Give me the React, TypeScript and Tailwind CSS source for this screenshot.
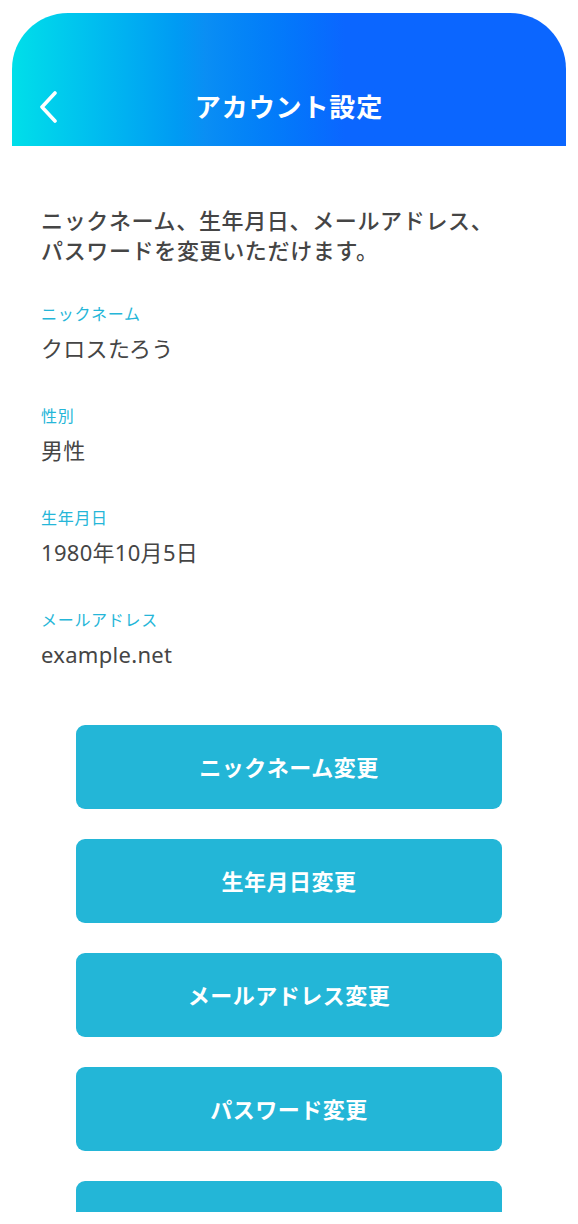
import React from 'react';

const fields = [
  { label: 'ニックネーム', value: 'クロスたろう' },
  { label: '性別', value: '男性' },
  { label: '生年月日', value: '1980年10月5日' },
  { label: 'メールアドレス', value: 'example.net' },
];

const actions = ['ニックネーム変更', '生年月日変更', 'メールアドレス変更', 'パスワード変更', '退会'];

export default function App() {
  return (
    <div
      className="min-h-screen w-full bg-white overflow-hidden"
      style={{ fontFamily: '"Noto Sans", "Noto Sans CJK JP", sans-serif' }}
    >
      {/* header */}
      <div className="px-[12px] pt-[13px]">
        <div className="relative h-[133px] rounded-t-[56px] bg-linear-to-r from-[#00dfe9] via-[#0a8ef4] via-35% to-[#0b66ff] to-60% flex items-center justify-center pt-[55px]">
          <button className="absolute left-[27px] top-[78px] p-0">
            <svg width="20" height="32" viewBox="0 0 20 32" fill="none">
              <path d="M16 2 L3 16 L16 30" stroke="white" strokeWidth="3.6" strokeLinecap="round" strokeLinejoin="round" />
            </svg>
          </button>
          <h1 className="text-white text-[26px] font-bold leading-none tracking-[0.9px]">アカウント設定</h1>
        </div>
      </div>

      <div className="px-[41px] pt-[59px]">
        <p className="text-[22px] leading-[30px] font-medium text-[#454545] tracking-[0.65px]">
          ニックネーム、生年月日、メールアドレス、
          <br />
          パスワードを変更いただけます。
        </p>

        <div className="mt-[38px] flex flex-col gap-[42px]">
          {fields.map((f) => (
            <div key={f.label} className="flex flex-col gap-[8px]">
              <span className="text-[16px] leading-[22px] text-[#25b6d8] tracking-[0.7px]">{f.label}</span>
              <span className="text-[22px] leading-[30px] text-[#454545] tracking-[0.3px]">{f.value}</span>
            </div>
          ))}
        </div>
      </div>

      <div className="mt-[56px] px-[76px] flex flex-col gap-[30px]">
        {actions.map((a) => (
          <button
            key={a}
            className="h-[84px] w-full rounded-[9px] bg-[#23b6d7] text-white text-[22px] font-bold tracking-[0.5px] flex items-center justify-center"
          >
            {a}
          </button>
        ))}
      </div>
      <div className="h-[40px]" />

      {/* bottom safe area */}
      <div className="fixed bottom-0 left-0 right-0 h-[12px] bg-white" />
    </div>
  );
}
